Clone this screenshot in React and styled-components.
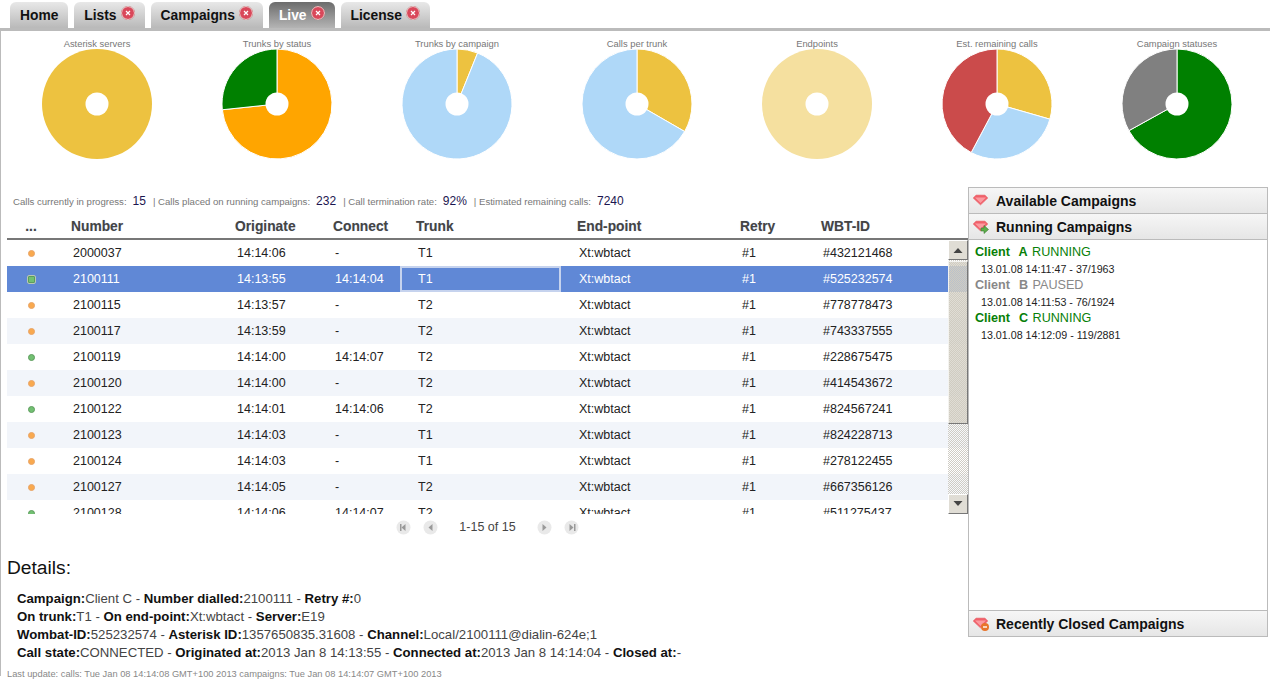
import React from 'react';
import styled, { createGlobalStyle } from 'styled-components';

const GlobalStyle = createGlobalStyle`
  html, body {
    margin: 0;
    padding: 0;
    background: #fff;
    font-family: "Liberation Sans", Arial, sans-serif;
    color: #222;
    overflow: hidden;
  }
`;

const Page = styled.div`
  width: 1270px;
  height: 689px;
  overflow: hidden;
`;

const TabBar = styled.div`
  display: flex;
  gap: 6px;
  height: 26px;
  padding: 2px 0 0 10px;
  border-bottom: 3px solid #bbb;
`;

const Tab = styled.div`
  display: flex;
  align-items: center;
  gap: 4px;
  height: 26px;
  padding: 0 ${props => (props.$closable ? 10 : 10)}px 0 10px;
  border-radius: 6px 6px 0 0;
  font-size: 13.8px;
  font-weight: bold;
  color: ${props => (props.$active ? '#fff' : '#111')};
  background: ${props =>
    props.$active
      ? 'linear-gradient(#6c6c6c, #b4b4b4)'
      : 'linear-gradient(#e8e8e8, #b9b9b9)'};
`;

const Content = styled.div`
  border-left: 1px solid #bbb;
  padding-left: 6px;
  height: 645px;
`;

const ChartRow = styled.div`
  display: flex;
  padding-top: 7px;
`;

const ChartCell = styled.div`
  width: 180px;
  display: flex;
  flex-direction: column;
  align-items: center;
`;

const ChartTitle = styled.div`
  height: 11px;
  line-height: 11px;
  font-size: 9.4px;
  color: #777;
`;

const Main = styled.div`
  display: flex;
  margin-top: 28px;
`;

const LeftColumn = styled.div`
  width: 961px;
`;

const Stats = styled.div`
  display: flex;
  align-items: center;
  height: 28px;
  padding-left: 6px;
  font-size: 9.6px;
  color: #777;
  white-space: pre;
`;

const StatValue = styled.span`
  margin: 0 7px 0 6px;
  font-size: 12px;
  color: #1c1650;
`;

const gridColumns = '48px 164px 98px 83px 161px 163px 81px 163px';

const HeaderRow = styled.div`
  display: grid;
  grid-template-columns: ${gridColumns};
  align-items: center;
  height: 23px;
  border-bottom: 2px solid #777;
  font-size: 13.8px;
  font-weight: bold;
  color: #444;
  text-shadow: 0 0 1px #c8d4ee;
`;

const HeaderCell = styled.div`
  padding-left: ${props => (props.$center ? 0 : 16)}px;
  text-align: ${props => (props.$center ? 'center' : 'left')};
`;

const TableBody = styled.div`
  position: relative;
  height: 274px;
  overflow: hidden;
`;

const Row = styled.div`
  display: grid;
  grid-template-columns: ${gridColumns};
  align-items: center;
  height: 26px;
  font-size: 12.5px;
  color: ${props => (props.$selected ? '#fff' : '#222')};
  background: ${props => {
    if (props.$selected) return '#6088d6';
    return props.$alt ? '#f2f5fa' : '#fff';
  }};
`;

const Cell = styled.div`
  display: flex;
  align-items: center;
  box-sizing: border-box;
  height: 26px;
  padding-left: 18px;
  border: ${props => (props.$focused ? '2px solid #c6d3ee' : 'none')};
  ${props => props.$focused && 'padding-left: 16px;'}
`;

const BulletCell = styled.div`
  display: flex;
  justify-content: center;
`;

const Bullet = styled.span`
  width: 5px;
  height: 5px;
  border: 1px solid ${props => (props.$green ? '#5d9c5d' : '#e8a468')};
  border-radius: ${props => (props.$square ? '1px' : '50%')};
  background: ${props => (props.$green ? '#72c072' : '#f9a94e')};
  outline: ${props => (props.$square ? '1px solid #b9c9b0' : 'none')};
`;

const Scrollbar = styled.div`
  position: absolute;
  top: 0;
  right: 0;
  bottom: 0;
  width: 20px;
  display: flex;
  flex-direction: column;
  background-color: rgba(255, 255, 255, 0.3);
  background-image: conic-gradient(#cfccc4 25%, transparent 0 50%, #cfccc4 0 75%, transparent 0);
  background-size: 2px 2px;
`;

const ScrollButton = styled.div`
  display: flex;
  align-items: center;
  justify-content: center;
  box-sizing: border-box;
  height: 20px;
  background: #e0ddd5;
  border: 1px solid;
  border-color: #fff #777 #777 #fff;
`;

const ScrollThumb = styled.div`
  box-sizing: border-box;
  height: 163px;
  margin-top: 1px;
  background: rgba(208, 203, 191, 0.66);
  border: 1px solid;
  border-color: #f4f3ef #777 #777 #f4f3ef;
`;

const ScrollSpacer = styled.div`
  flex: 1;
`;

const Pager = styled.div`
  display: flex;
  align-items: center;
  justify-content: center;
  height: 26px;
  font-size: 12.5px;
  color: #444;
`;

const PagerButton = styled.svg`
  width: 15px;
  height: 15px;
  margin: 0 6px;
`;

const PagerLabel = styled.span`
  margin: 0 15px;
`;

const DetailsTitle = styled.div`
  margin-top: 15px;
  height: 26px;
  line-height: 26px;
  font-size: 19.2px;
  color: #111;
`;

const DetailsBody = styled.div`
  margin-top: 9px;
  padding-left: 10px;
  font-size: 13.2px;
  line-height: 18px;
  color: #444;
  white-space: nowrap;
`;

const Label = styled.b`
  color: #111;
`;

const Footer = styled.div`
  margin-top: 6px;
  font-size: 9.3px;
  line-height: 12px;
  color: #888;
`;

const SidePanel = styled.div`
  box-sizing: border-box;
  display: flex;
  flex-direction: column;
  width: 300px;
  height: 450px;
  border: 1px solid #bbb;
`;

const SideHeader = styled.div`
  display: flex;
  align-items: center;
  gap: 6px;
  box-sizing: border-box;
  height: 26px;
  padding-left: 3px;
  flex-shrink: 0;
  font-size: 14px;
  font-weight: bold;
  color: #111;
  background: linear-gradient(#f6f6f6, #e6e6e6);
  border-bottom: ${props => (props.$last ? 'none' : '1px solid #bbb')};
  border-top: ${props => (props.$last ? '1px solid #bbb' : 'none')};
`;

const SideBody = styled.div`
  flex: 1;
  padding: 4px 0 0 6px;
`;

const CampaignName = styled.div`
  height: 16.5px;
  line-height: 16.5px;
  font-size: 12.6px;
  color: ${props => (props.$paused ? '#888' : '#078007')};
  word-spacing: 1px;
  white-space: pre;
`;

const CampaignMeta = styled.div`
  height: 16.5px;
  line-height: 16.5px;
  padding-left: 6px;
  font-size: 10.7px;
  color: #222;
`;

// flot style pie, angles in degrees clockwise from the top
const Pie = ({ slices }) => {
  const c = 55;
  const point = angle => {
    const rad = ((angle - 90) * Math.PI) / 180;
    return `${(c + c * Math.cos(rad)).toFixed(2)} ${(c + c * Math.sin(rad)).toFixed(2)}`;
  };
  let from = 0;
  return (
    <svg width="110" height="110" viewBox="0 0 110 110">
      {slices.length === 1 && <circle cx={c} cy={c} r={c} fill={slices[0][1]} />}
      {slices.length > 1 &&
        slices.map(([to, color]) => {
          const large = to - from > 180 ? 1 : 0;
          const d = `M${c} ${c} L${point(from)} A${c} ${c} 0 ${large} 1 ${point(to)} Z`;
          from = to;
          return <path key={to} d={d} fill={color} stroke="#fff" strokeWidth="1" />;
        })}
      <circle cx={c} cy={c} r="11.5" fill="#fff" />
    </svg>
  );
};

const CloseIcon = () => (
  <svg width="14" height="14" viewBox="0 0 14 14" style={{ marginTop: -4 }}>
    <circle cx="7" cy="7" r="6.5" fill="#d9485a" stroke="#fff" strokeWidth="1" />
    <circle cx="7" cy="7" r="6.8" fill="none" stroke="#a33" strokeWidth="0.4" />
    <path d="M5 5 L9 9 M9 5 L5 9" stroke="#fff" strokeWidth="1.2" />
  </svg>
);

const GemIcon = ({ badge }) => (
  <svg width="18" height="16" viewBox="0 0 18 16">
    <path d="M1 5 L4 2 L13 2 L16 5 L8.5 12 Z" fill="#f0606a" stroke="#e8888c" strokeWidth="0.6" />
    <path d="M3 4.5 L14 4.5 L8.5 10 Z" fill="#fb9aa0" />
    {badge === 'run' && <path d="M9 9 H12 V6.5 L16.5 10.5 L12 14.5 V12 H9 Z" fill="#5cae4a" stroke="#3c7a30" strokeWidth="0.6" />}
    {badge === 'stop' && (
      <g>
        <circle cx="13" cy="11" r="4" fill="#e8752c" />
        <path d="M11 11 H15" stroke="#fff" strokeWidth="1.4" />
      </g>
    )}
  </svg>
);

const PagerIcon = ({ dir, bar }) => (
  <PagerButton viewBox="0 0 15 15">
    <circle cx="7.5" cy="7.5" r="7" fill="#e9e9e9" />
    {dir === 'left' ? <path d="M9.5 4 L5.5 7.5 L9.5 11 Z" fill="#999" /> : <path d="M5.5 4 L9.5 7.5 L5.5 11 Z" fill="#999" />}
    {bar && <rect x={dir === 'left' ? 4 : 10} y="4" width="1.5" height="7" fill="#999" />}
  </PagerButton>
);

const ArrowIcon = ({ up }) => (
  <svg width="10" height="6" viewBox="0 0 10 6">
    <path d={up ? 'M0.5 6 L5 1 L9.5 6 Z' : 'M0.5 0 L5 5 L9.5 0 Z'} fill="#444" />
  </svg>
);

const CHARTS = [
  { title: 'Asterisk servers', slices: [[360, '#edc240']] },
  { title: 'Trunks by status', slices: [[264, '#ffa500'], [360, '#008000']] },
  { title: 'Trunks by campaign', slices: [[22, '#edc240'], [360, '#afd8f8']] },
  { title: 'Calls per trunk', slices: [[120, '#edc240'], [360, '#afd8f8']] },
  { title: 'Endpoints', slices: [[360, '#f5e09f']] },
  { title: 'Est. remaining calls', slices: [[106, '#edc240'], [208, '#afd8f8'], [360, '#cb4b4b']] },
  { title: 'Campaign statuses', slices: [[241, '#008000'], [360, '#808080']] },
];

const CALLS = [
  ['2000037', '14:14:06', '-', 'T1', '#432121468'],
  ['2100111', '14:13:55', '14:14:04', 'T1', '#525232574'],
  ['2100115', '14:13:57', '-', 'T2', '#778778473'],
  ['2100117', '14:13:59', '-', 'T2', '#743337555'],
  ['2100119', '14:14:00', '14:14:07', 'T2', '#228675475'],
  ['2100120', '14:14:00', '-', 'T2', '#414543672'],
  ['2100122', '14:14:01', '14:14:06', 'T2', '#824567241'],
  ['2100123', '14:14:03', '-', 'T1', '#824228713'],
  ['2100124', '14:14:03', '-', 'T1', '#278122455'],
  ['2100127', '14:14:05', '-', 'T2', '#667356126'],
  ['2100128', '14:14:06', '14:14:07', 'T2', '#511275437'],
];

const CAMPAIGNS = [
  { name: 'Client  A', state: 'RUNNING', meta: '13.01.08 14:11:47 - 37/1963' },
  { name: 'Client  B', state: 'PAUSED', meta: '13.01.08 14:11:53 - 76/1924', paused: true },
  { name: 'Client  C', state: 'RUNNING', meta: '13.01.08 14:12:09 - 119/2881' },
];

export default function App() {
  return (
    <Page>
      <GlobalStyle />
      <TabBar>
        <Tab>Home</Tab>
        <Tab $closable>Lists <CloseIcon /></Tab>
        <Tab $closable>Campaigns <CloseIcon /></Tab>
        <Tab $closable $active>Live <CloseIcon /></Tab>
        <Tab $closable>License <CloseIcon /></Tab>
      </TabBar>
      <Content>
        <ChartRow>
          {CHARTS.map(chart => (
            <ChartCell key={chart.title}>
              <ChartTitle>{chart.title}</ChartTitle>
              <Pie slices={chart.slices} />
            </ChartCell>
          ))}
        </ChartRow>
        <Main>
          <LeftColumn>
            <Stats>
              Calls currently in progress:<StatValue>15</StatValue>| Calls placed on running campaigns:<StatValue>232</StatValue>| Call termination rate:<StatValue>92%</StatValue>| Estimated remaining calls:<StatValue>7240</StatValue>
            </Stats>
            <HeaderRow>
              <HeaderCell $center>...</HeaderCell>
              <HeaderCell>Number</HeaderCell>
              <HeaderCell>Originate</HeaderCell>
              <HeaderCell>Connect</HeaderCell>
              <HeaderCell>Trunk</HeaderCell>
              <HeaderCell>End-point</HeaderCell>
              <HeaderCell>Retry</HeaderCell>
              <HeaderCell>WBT-ID</HeaderCell>
            </HeaderRow>
            <TableBody>
              {CALLS.map(([number, originate, connect, trunk, wbt], i) => (
                <Row key={number} $alt={i % 2 === 1} $selected={i === 1}>
                  <BulletCell>
                    <Bullet $green={connect !== '-'} $square={i === 1} />
                  </BulletCell>
                  <Cell>{number}</Cell>
                  <Cell>{originate}</Cell>
                  <Cell>{connect}</Cell>
                  <Cell $focused={i === 1}>{trunk}</Cell>
                  <Cell>Xt:wbtact</Cell>
                  <Cell>#1</Cell>
                  <Cell>{wbt}</Cell>
                </Row>
              ))}
              <Scrollbar>
                <ScrollButton><ArrowIcon up /></ScrollButton>
                <ScrollThumb />
                <ScrollSpacer />
                <ScrollButton><ArrowIcon /></ScrollButton>
              </Scrollbar>
            </TableBody>
            <Pager>
              <PagerIcon dir="left" bar />
              <PagerIcon dir="left" />
              <PagerLabel>1-15 of 15</PagerLabel>
              <PagerIcon dir="right" />
              <PagerIcon dir="right" bar />
            </Pager>
            <DetailsTitle>Details:</DetailsTitle>
            <DetailsBody>
              <div><Label>Campaign:</Label>Client C - <Label>Number dialled:</Label>2100111 - <Label>Retry #:</Label>0</div>
              <div><Label>On trunk:</Label>T1 - <Label>On end-point:</Label>Xt:wbtact - <Label>Server:</Label>E19</div>
              <div><Label>Wombat-ID:</Label>525232574 - <Label>Asterisk ID:</Label>1357650835.31608 - <Label>Channel:</Label>Local/2100111@dialin-624e;1</div>
              <div><Label>Call state:</Label>CONNECTED - <Label>Originated at:</Label>2013 Jan 8 14:13:55 - <Label>Connected at:</Label>2013 Jan 8 14:14:04 - <Label>Closed at:</Label>-</div>
            </DetailsBody>
            <Footer>Last update: calls: Tue Jan 08 14:14:08 GMT+100 2013 campaigns: Tue Jan 08 14:14:07 GMT+100 2013</Footer>
          </LeftColumn>
          <SidePanel>
            <SideHeader><GemIcon />Available Campaigns</SideHeader>
            <SideHeader><GemIcon badge="run" />Running Campaigns</SideHeader>
            <SideBody>
              {CAMPAIGNS.map(campaign => (
                <React.Fragment key={campaign.name}>
                  <CampaignName $paused={campaign.paused}><b>{campaign.name}</b> {campaign.state}</CampaignName>
                  <CampaignMeta>{campaign.meta}</CampaignMeta>
                </React.Fragment>
              ))}
            </SideBody>
            <SideHeader $last><GemIcon badge="stop" />Recently Closed Campaigns</SideHeader>
          </SidePanel>
        </Main>
      </Content>
    </Page>
  );
}
